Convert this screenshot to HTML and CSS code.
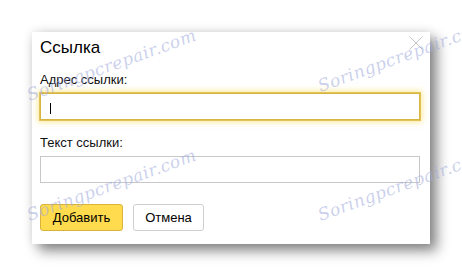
FILE: index.html
```html
<!DOCTYPE html>
<html lang="ru">
<head>
<meta charset="utf-8">
<title>Ссылка</title>
<link rel="stylesheet" href="styles.css">
</head>
<body>
<div class="dialog">
  <div class="title">Ссылка</div>
  <svg class="close" width="14" height="14" viewBox="0 0 14 14"><path d="M0.5 0.5L13.5 13.5M13.5 0.5L0.5 13.5" stroke="#c4c4c4" stroke-width="1" fill="none"/></svg>
  <div class="label label-first">Адрес ссылки:</div>
  <div class="input focused"><span class="caret"></span></div>
  <div class="label">Текст ссылки:</div>
  <div class="input"></div>
  <div class="buttons">
    <button class="btn btn-primary">Добавить</button>
    <button class="btn btn-cancel">Отмена</button>
  </div>
</div>
<div class="wm wm1">Soringpcrepair.com</div>
<div class="wm wm2">Soringpcrepair.com</div>
<div class="wm wm3">Soringpcrepair.com</div>
<div class="wm wm4">Soringpcrepair.com</div>
</body>
</html>
```
FILE: styles.css
```css
html, body {
  margin: 0;
  padding: 0;
  background: #fff;
}
body {
  font-family: "Liberation Sans", Arial, sans-serif;
  color: #000;
  padding: 32px 0 0 32px;
  height: 276px;
  box-sizing: border-box;
  overflow: hidden;
  position: relative;
}
.dialog {
  position: relative;
  width: 398px;
  height: 212px;
  box-sizing: border-box;
  background: #fff;
  padding: 6px 8px 0 8px;
  box-shadow: 7px 7px 12px rgba(0,0,0,0.45), 0 0 10px rgba(0,0,0,0.12);
  display: flex;
  flex-direction: column;
}
.title {
  font-size: 17px;
  line-height: 20px;
}
.close {
  position: absolute;
  right: 7px;
  top: 4px;
}
.label {
  font-size: 13px;
  line-height: 16px;
  margin-top: 15px;
  margin-bottom: 5px;
  color: #111;
}
.label-first {
  margin-top: 14px;
}
.input {
  height: 27px;
  width: 380px;
  box-sizing: border-box;
  border: 1px solid #c8c8c8;
  position: relative;
}
.input.focused {
  border-color: #d7b541;
  box-shadow: 0 0 0 1px #e2c35a, 0 0 6px 2px rgba(255,214,60,0.55);
}
.caret {
  position: absolute;
  left: 9px;
  top: 9px;
  width: 1px;
  height: 11px;
  background: #000;
}
.buttons {
  display: flex;
  gap: 10px;
  margin-top: 21px;
}
.btn {
  font-family: "Liberation Sans", Arial, sans-serif;
  font-size: 13px;
  height: 27px;
  padding: 0;
  border: 1px solid #cfcfcf;
  border-radius: 3px;
  background: #fff;
  color: #000;
  box-sizing: border-box;
  text-align: center;
}
.btn-primary {
  width: 83px;
  background: #ffdb4d;
  border-color: #d8b43a;
}
.btn-cancel {
  width: 71px;
}
.wm {
  position: absolute;
  font-family: "DejaVu Serif", serif;
  font-style: italic;
  font-size: 17px;
  letter-spacing: 0.5px;
  color: rgba(160,170,220,0.55);
  transform: rotate(-20deg);
  transform-origin: 0 0;
  white-space: nowrap;
  pointer-events: none;
}
.wm1 { left: 24px; top: 86px; }
.wm2 { left: 315px; top: 77px; }
.wm3 { left: 24px; top: 206px; }
.wm4 { left: 315px; top: 206px; }
```
